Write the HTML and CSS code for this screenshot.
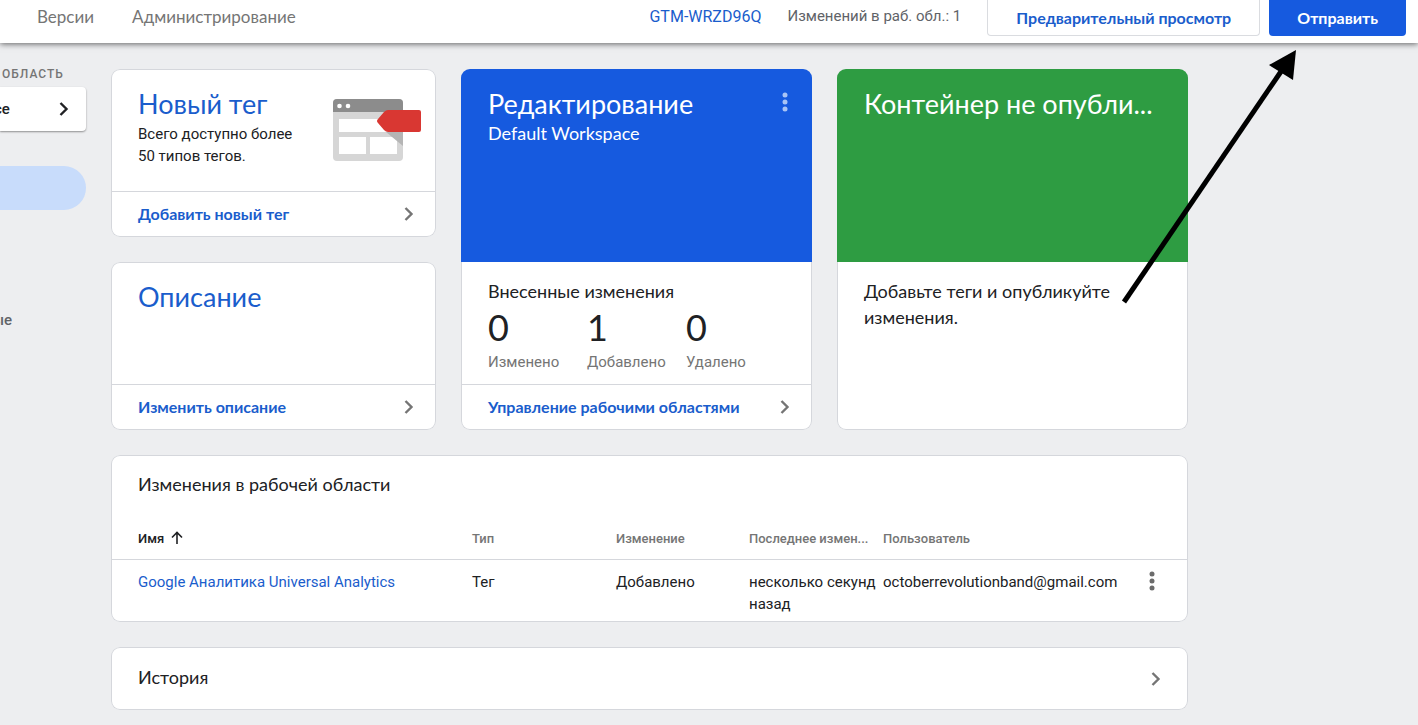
FILE: index.html
```html
<!DOCTYPE html>
<html lang="ru">
<head>
    <meta charset="UTF-8">
    <meta name="viewport" content="width=device-width, initial-scale=1.0">
    <title>Диспетчер тегов</title>
    <link rel="stylesheet" href="styles.css">
</head>
<body>
    <header class="topbar">
        <nav class="tabs">
            <a href="#">Версии</a>
            <a href="#">Администрирование</a>
        </nav>
        <div class="actions">
            <a class="container-id" href="#">GTM-WRZD96Q</a>
            <span class="change-count">Изменений в раб. обл.: 1</span>
            <button class="btn btn-outline" type="button">Предварительный просмотр</button>
            <button class="btn btn-primary" type="button">Отправить</button>
        </div>
    </header>

    <div class="page">
        <aside class="sidebar">
            <div class="sidebar-label">ОБЛАСТЬ</div>
            <button class="workspace" type="button">
                <span>ce</span>
                <svg class="chevron" viewBox="0 0 10 16"><path d="M1.500 2 7.500 8l-6 6"/></svg>
            </button>
            <a class="nav-active" href="#" aria-label="Обзор"></a>
            <a class="nav-item" href="#">ые</a>
        </aside>

        <main class="content">
            <div class="cards">
                <section class="card">
                    <div class="card-body new-tag">
                        <div>
                            <h2>Новый тег</h2>
                            <p>Всего доступно более<br>50 типов тегов.</p>
                        </div>
                        <svg class="tag-art" viewBox="0 0 88 62">
                            <rect width="70" height="62" rx="4" fill="#d6d6d6"/>
                            <path d="M4 0h62a4 4 0 0 1 4 4v9H0V4a4 4 0 0 1 4-4z" fill="#8c8c8c"/>
                            <circle cx="6.500" cy="7" r="2.300" fill="#fff"/>
                            <circle cx="15" cy="7" r="2.300" fill="#fff"/>
                            <path d="M6 20h58v13H6zM6 38h27v17H6zM37 38h27v17H37z" fill="#fff"/>
                            <path d="M53 33h17v14z" fill="#b5b5b5"/>
                            <path d="M55 11h31a2 2 0 0 1 2 2v18a2 2 0 0 1-2 2H55q-2 0-4-2l-6-7q-2-2 0-4l6-7q2-2 4-2z" fill="#d93732"/>
                        </svg>
                    </div>
                    <a class="card-link" href="#">Добавить новый тег
                        <svg class="chevron" viewBox="0 0 10 16"><path d="M1.500 2 7.500 8l-6 6"/></svg>
                    </a>
                </section>

                <section class="card card-tall">
                    <div class="banner banner-blue">
                        <div class="banner-title">
                            <h2>Редактирование</h2>
                            <button class="more" type="button" aria-label="Ещё">
                                <svg viewBox="0 0 6 20"><circle cx="3" cy="3" r="2.500"/><circle cx="3" cy="10" r="2.500"/><circle cx="3" cy="17" r="2.500"/></svg>
                            </button>
                        </div>
                        <div class="subtitle">Default Workspace</div>
                    </div>
                    <div class="stats">
                        <h3>Внесенные изменения</h3>
                        <div class="stat-row">
                            <div><b>0</b><span>Изменено</span></div>
                            <div><b>1</b><span>Добавлено</span></div>
                            <div><b>0</b><span>Удалено</span></div>
                        </div>
                    </div>
                    <a class="card-link" href="#">Управление рабочими областями
                        <svg class="chevron" viewBox="0 0 10 16"><path d="M1.500 2 7.500 8l-6 6"/></svg>
                    </a>
                </section>

                <section class="card card-tall">
                    <div class="banner banner-green">
                        <h2>Контейнер не опубли...</h2>
                    </div>
                    <p class="hint">Добавьте теги и опубликуйте изменения.</p>
                </section>

                <section class="card">
                    <div class="card-body">
                        <h2>Описание</h2>
                    </div>
                    <a class="card-link" href="#">Изменить описание
                        <svg class="chevron" viewBox="0 0 10 16"><path d="M1.500 2 7.500 8l-6 6"/></svg>
                    </a>
                </section>
            </div>

            <section class="card">
                <h3 class="table-title">Изменения в рабочей области</h3>
                <table class="changes">
                    <colgroup>
                        <col class="col-name">
                        <col class="col-type">
                        <col class="col-change">
                        <col class="col-date">
                        <col>
                        <col class="col-menu">
                    </colgroup>
                    <thead>
                        <tr>
                            <th class="sorted">Имя
                                <svg viewBox="0 0 12 14"><path d="M6 13V1.500M1 6.500l5-5 5 5"/></svg>
                            </th>
                            <th>Тип</th>
                            <th>Изменение</th>
                            <th>Последнее измен...</th>
                            <th>Пользователь</th>
                            <th></th>
                        </tr>
                    </thead>
                    <tbody>
                        <tr>
                            <td><a href="#">Google Аналитика Universal Analytics</a></td>
                            <td>Тег</td>
                            <td>Добавлено</td>
                            <td>несколько секунд назад</td>
                            <td>octoberrevolutionband@gmail.com</td>
                            <td>
                                <button class="more" type="button" aria-label="Ещё">
                                    <svg viewBox="0 0 6 20"><circle cx="3" cy="3" r="2.500"/><circle cx="3" cy="10" r="2.500"/><circle cx="3" cy="17" r="2.500"/></svg>
                                </button>
                            </td>
                        </tr>
                    </tbody>
                </table>
            </section>

            <section class="card history">
                <h3>История</h3>
                <svg class="chevron" viewBox="0 0 10 16"><path d="M1.500 2 7.500 8l-6 6"/></svg>
            </section>
        </main>
    </div>

    <!-- Pointer to the submit button -->
    <svg class="pointer" viewBox="0 0 180 260">
        <path d="M5 254 163 22" stroke="#000" stroke-width="5"/>
        <path d="M177 2 150 17l24 15z"/>
    </svg>
</body>
</html>
```
FILE: styles.css
```css
* {
    box-sizing: border-box;
}

body {
    position: relative;
    margin: 0;
    min-height: 100vh;
    background: #edeef0;
    color: #202124;
    font-family: Roboto, "Liberation Sans", sans-serif;
    font-size: 15px;
    line-height: 22px;
    overflow-x: hidden;
}

h2, h3, p {
    margin: 0;
    font-weight: 400;
}

h2, h3, .tabs, .btn, .card-link, .subtitle, .hint, .stat-row b {
    font-family: Lato, Roboto, sans-serif;
}

h2 {
    font-size: 27px;
    line-height: 34px;
}

h3 {
    font-size: 18px;
    line-height: 24px;
}

a {
    color: #1a5dcc;
    text-decoration: none;
}

button {
    border: 0;
    background: none;
    font: inherit;
    cursor: pointer;
}

/* Top bar */
.topbar {
    display: flex;
    justify-content: space-between;
    height: 43px;
    padding: 0 12px 0 37px;
    background: #fff;
    box-shadow: 0 1px 6px rgba(0, 0, 0, 0.6);
}

.tabs {
    display: flex;
    gap: 38px;
    padding-top: 6px;
    font-size: 17px;
}

.tabs a {
    color: #757575;
}

.actions {
    display: flex;
    align-items: flex-start;
    white-space: nowrap;
}

.container-id {
    margin-right: 26px;
    padding-top: 6px;
    font-size: 16px;
}

.change-count {
    margin-right: 26px;
    padding-top: 5px;
    color: #5f6368;
}

.btn {
    height: 36px;
    padding: 0 28px;
    border-radius: 0 0 4px 4px;
    font-size: 16px;
    font-weight: 700;
}

.btn-outline {
    margin-right: 9px;
    border: 1px solid #dadce0;
    border-top: 0;
    color: #1a5dcc;
}

.btn-primary {
    background: #165adf;
    color: #fff;
}

/* Page */
.page {
    display: grid;
    grid-template-columns: 86px minmax(0, 1077px);
    column-gap: 25px;
    padding-top: 26px;
}

.sidebar {
    display: flex;
    flex-direction: column;
    font-weight: 500;
}

.sidebar-label {
    margin-top: -6px;
    padding-left: 2px;
    color: #757575;
    font-size: 12px;
    letter-spacing: 1px;
}

.workspace {
    display: flex;
    align-items: center;
    justify-content: space-between;
    height: 44px;
    margin-top: 2px;
    padding: 0 17px 0 0;
    border-radius: 0 4px 4px 0;
    background: #fff;
    color: #202124;
    box-shadow: 0 1px 2px rgba(0, 0, 0, 0.4);
}

.workspace span {
    margin-left: -6px;
}

.workspace .chevron {
    stroke: #202124;
}

.nav-active {
    height: 44px;
    margin-top: 35px;
    border-radius: 0 22px 22px 0;
    background: #c8dcfb;
}

.nav-item {
    margin: 99px 0 0 -8px;
    color: #5f6368;
}

.content {
    display: flex;
    flex-direction: column;
    gap: 25px;
    padding-bottom: 14px;
}

/* Cards */
.cards {
    display: grid;
    grid-template-columns: 325fr 351fr 351fr;
    grid-template-rows: 168px 168px;
    gap: 25px;
}

.card {
    display: flex;
    flex-direction: column;
    border-radius: 9px;
    background: #fff;
    box-shadow: inset 0 0 0 1px #d5d7dc;
    overflow: hidden;
}

.card-tall {
    grid-row: span 2;
}

.card-body {
    flex: 1;
    padding: 18px 15px 0 27px;
}

.card-body h2 {
    color: #1a5dcc;
}

.new-tag {
    display: flex;
    justify-content: space-between;
}

.new-tag p {
    margin-top: 2px;
}

.tag-art {
    width: 88px;
    height: 62px;
    margin-top: 12px;
}

.card-link {
    display: flex;
    align-items: center;
    justify-content: space-between;
    height: 46px;
    padding: 0 22px 2px 27px;
    border-top: 1px solid #d5d7dc;
    font-size: 16px;
    font-weight: 700;
}

.chevron {
    width: 10px;
    height: 16px;
    fill: none;
    stroke: #757575;
    stroke-width: 2.4;
}

.banner {
    height: 193px;
    padding: 18px 24px 0 27px;
    color: #fff;
}

.banner h2 {
    white-space: nowrap;
}

.banner-blue {
    background: #165adf;
}

.banner-green {
    background: #2e9c42;
}

.banner-title {
    display: flex;
    align-items: center;
    justify-content: space-between;
}

.subtitle {
    font-size: 18px;
    line-height: 24px;
}

.more {
    display: flex;
    padding: 0;
}

.more svg {
    width: 6px;
    height: 20px;
    fill: #6b6b6b;
}

.banner .more {
    padding-bottom: 4px;
}

.banner .more svg {
    fill: #a9c4f5;
}

.stats {
    flex: 1;
    padding: 17px 27px 0;
}

.stat-row {
    display: grid;
    grid-template-columns: repeat(3, 99px);
    color: #757575;
}

.stat-row b {
    display: block;
    color: #202124;
    font-size: 36px;
    font-weight: 400;
    line-height: 48px;
}

.hint {
    padding: 16px 60px 0 27px;
    font-size: 18px;
    line-height: 26px;
}

/* Workspace changes */
.table-title {
    padding: 17px 27px 0;
}

.changes {
    width: 100%;
    margin-top: 20px;
    border-collapse: collapse;
    table-layout: fixed;
    text-align: left;
}

.col-name {
    width: 361px;
}

.col-type {
    width: 144px;
}

.col-change {
    width: 133px;
}

.col-date {
    width: 134px;
}

.col-menu {
    width: 39px;
}

.changes th,
.changes td {
    padding: 0 2px 0 0;
    vertical-align: top;
}

.changes th {
    height: 43px;
    padding-top: 12px;
    border-bottom: 1px solid #d5d7dc;
    color: #757575;
    font-size: 13px;
    font-weight: 500;
    white-space: nowrap;
}

.changes td {
    height: 63px;
    padding-top: 11px;
}

.changes th:first-child,
.changes td:first-child {
    padding-left: 27px;
}

.changes .sorted {
    color: #202124;
}

.sorted svg {
    width: 12px;
    height: 14px;
    margin-left: 4px;
    vertical-align: -2px;
    fill: none;
    stroke: #202124;
    stroke-width: 1.6;
}

.history {
    flex-direction: row;
    align-items: center;
    justify-content: space-between;
    height: 63px;
    padding: 0 27px;
}

.history h3 {
    padding-bottom: 3px;
}

.pointer {
    position: absolute;
    top: 48px;
    left: 1119px;
    width: 180px;
    height: 260px;
    pointer-events: none;
}
```
